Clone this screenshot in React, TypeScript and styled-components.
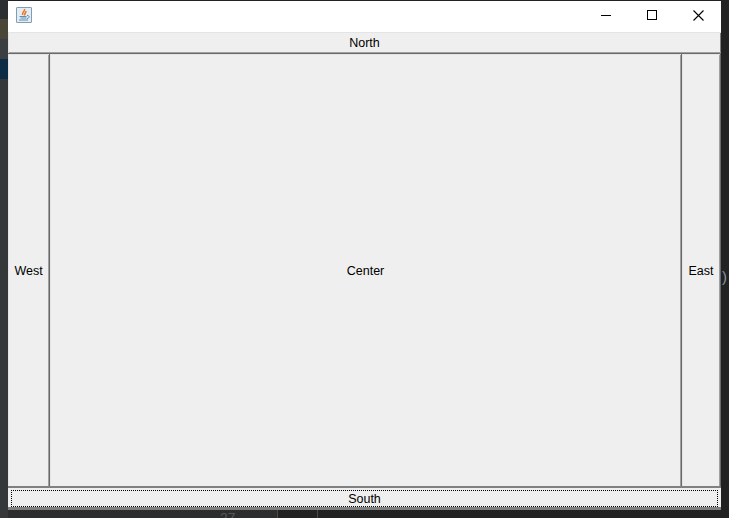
import React from "react";
import styled, { createGlobalStyle } from "styled-components";

const Global = createGlobalStyle`
  html, body { margin: 0; padding: 0; background: #222222; }
  body { font-family: "Liberation Sans", Arial, sans-serif; }
`;

const Desktop = styled.div`
  width: 729px;
  height: 518px;
  display: flex;
  overflow: hidden;
  background: #222222;
`;

const LeftStrip = styled.div`
  width: 8px;
  flex: none;
  display: flex;
  flex-direction: column;
`;

const Stripe = styled.div<{ $h: number; $c: string }>`
  height: ${(p) => p.$h}px;
  background: ${(p) => p.$c};
`;

const MainColumn = styled.div`
  width: 713px;
  flex: none;
  display: flex;
  flex-direction: column;
`;

const BelowWindow = styled.div`
  flex: 1;
  display: flex;
  overflow: hidden;
`;

const BelowCell = styled.div<{ $w: number; $c: string }>`
  width: ${(p) => p.$w}px;
  flex: none;
  box-sizing: border-box;
  background: ${(p) => p.$c};
  border-right: 1px solid #4a4a4a;
  color: #55585a;
  font-size: 14px;
  line-height: 16px;
  padding-left: 212px;
`;

const BelowPlain = styled(BelowCell)`
  padding-left: 0;
`;

const Side = styled.div`
  flex: 1;
  position: relative;
`;

const Paren = styled.span`
  position: absolute;
  left: 1px;
  top: 268px;
  font-size: 15px;
  color: #8494a2;
`;

const Window = styled.div`
  height: 509px;
  margin-top: 1px;
  flex: none;
  display: flex;
  flex-direction: column;
  background: #efefef;
`;

const TitleBar = styled.div`
  height: 31px;
  flex: none;
  background: #ffffff;
  display: flex;
  align-items: center;
  padding-left: 8px;
`;

const AppIcon = styled.div`
  width: 16px;
  height: 16px;
  box-sizing: border-box;
  border: 1px solid #7f9db5;
  border-radius: 1px;
  background: #e6edf2;
  margin-bottom: 3px;
  display: flex;
`;

const Controls = styled.div`
  margin-left: auto;
  display: flex;
  align-self: stretch;
`;

const Control = styled.div`
  width: 46px;
  display: flex;
  align-items: center;
  justify-content: center;
  padding-bottom: 3px;
`;

const Region = styled.div`
  box-sizing: border-box;
  display: flex;
  align-items: center;
  justify-content: center;
  background: #efefef;
  color: #000000;
  font-size: 12.5px;
`;

const NorthRegion = styled(Region)`
  flex: none;
  height: 22px;
  padding-top: 1px;
  border-bottom: 1px solid #6a6a6a;
  box-shadow: inset 1px 1px 0 #e4e4e4, inset 0 -1px 0 #a0a0a0, inset -1px 0 0 #808080;
`;

const Middle = styled.div`
  flex: none;
  height: 434px;
  display: flex;
  border-bottom: 2px solid #808080;
  box-sizing: border-box;
`;

const SideRegion = styled(Region)<{ $w?: number }>`
  ${(p) => (p.$w ? `width: ${p.$w}px; flex: none;` : "flex: 1;")}
  padding-top: 2px;
  border-right: 1px solid #6a6a6a;
  box-shadow: inset 1px 1px 0 #e4e4e4, inset -1px 0 0 #a0a0a0;
`;

const SouthRegion = styled(Region)`
  flex: none;
  height: 22px;
  padding: 2px 3px 0;
  border-bottom: 3px solid #808080;
`;

const dots = `repeating-linear-gradient(90deg, #000 0 1px, transparent 1px 2px)`;
const dotsV = `repeating-linear-gradient(0deg, #000 0 1px, transparent 1px 2px)`;

const Focus = styled.div`
  flex: 1;
  align-self: stretch;
  display: flex;
  align-items: center;
  justify-content: center;
  background-image: ${dots}, ${dots}, ${dotsV}, ${dotsV};
  background-size: 100% 1px, 100% 1px, 1px 100%, 1px 100%;
  background-position: 0 0, 0 100%, 0 0, 100% 0;
  background-repeat: no-repeat;
`;

export default function App() {
  return (
    <>
      <Global />
      <Desktop>
        <LeftStrip>
          <Stripe $h={19} $c="#2b2f31" />
          <Stripe $h={20} $c="#4a4739" />
          <Stripe $h={20} $c="#3c3f41" />
          <Stripe $h={20} $c="#0d2c45" />
          <Stripe $h={439} $c="#34383a" />
        </LeftStrip>
        <MainColumn>
          <Window>
            <TitleBar>
              <AppIcon>
                <svg width="14" height="14" viewBox="0 0 14 14">
                  <path d="M7.5 1C8.5 3 5 4 5.5 7M9 3C9 5 7.5 5.5 7.5 7.5" stroke="#e8792b" strokeWidth="1.5" fill="none" />
                  <path d="M2.5 8.5h7M3.5 10h6M2 12h9" stroke="#5f8fb3" strokeWidth="1" />
                  <path d="M10 7.5c3 0 3 2.5 0 3" stroke="#5f8fb3" strokeWidth="1" fill="none" />
                </svg>
              </AppIcon>
              <Controls>
                <Control>
                  <svg width="10" height="10" viewBox="0 0 10 10">
                    <path d="M0 5.5h10" stroke="#000" strokeWidth="1" />
                  </svg>
                </Control>
                <Control>
                  <svg width="10" height="10" viewBox="0 0 10 10">
                    <rect x="0.5" y="0.5" width="9" height="9" fill="none" stroke="#000" strokeWidth="1" />
                  </svg>
                </Control>
                <Control>
                  <svg width="11" height="11" viewBox="0 0 11 11">
                    <path d="M0.5 0.5l10 10M10.5 0.5l-10 10" stroke="#000" strokeWidth="1.1" />
                  </svg>
                </Control>
              </Controls>
            </TitleBar>
            <NorthRegion>North</NorthRegion>
            <Middle>
              <SideRegion $w={42}>West</SideRegion>
              <SideRegion>Center</SideRegion>
              <SideRegion $w={39}>East</SideRegion>
            </Middle>
            <SouthRegion>
              <Focus>South</Focus>
            </SouthRegion>
          </Window>
          <BelowWindow>
            <BelowCell $w={270} $c="#2b2d2f">27</BelowCell>
            <BelowPlain $w={40} $c="#222222" />
          </BelowWindow>
        </MainColumn>
        <Side>
          <Paren>)</Paren>
        </Side>
      </Desktop>
    </>
  );
}
